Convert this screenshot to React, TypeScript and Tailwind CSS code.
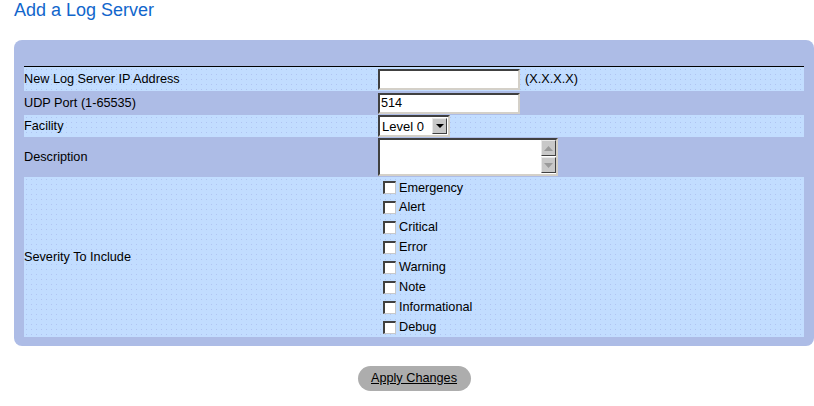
const severities = [
  "Emergency",
  "Alert",
  "Critical",
  "Error",
  "Warning",
  "Note",
  "Informational",
  "Debug",
];

const lightRow =
  "bg-[#c2ddff] bg-[radial-gradient(circle,#b0c4f2_0.6px,transparent_0.9px)] bg-[length:5px_5px]";
const darkRow = "bg-[#adbce6]";

const inset =
  "border-2 border-t-[#404040] border-l-[#404040] border-b-[#d4d0c8] border-r-[#d4d0c8] bg-white";

function Label({ children, light }: { children: React.ReactNode; light?: boolean }) {
  return (
    <div className={`flex items-center ${light ? lightRow : darkRow}`}>
      <span>{children}</span>
    </div>
  );
}

function Checkbox({ label }: { label: string }) {
  return (
    <div className="flex h-[20px] items-center pl-[5px]">
      <span className="w-[13px] h-[13px] bg-white border-t-2 border-l-2 border-b border-r border-t-[#404040] border-l-[#404040] border-b-[#c8c8c8] border-r-[#c8c8c8]" />
      <span className="ml-[3px]">{label}</span>
    </div>
  );
}

function ScrollBtn({ up }: { up?: boolean }) {
  return (
    <div className="w-[15px] h-[16px] flex items-center justify-center bg-[#c8c8c8] border border-t-[#e8e8e8] border-l-[#e8e8e8] border-b-[#404040] border-r-[#404040]">
      <svg width="9" height="5" viewBox="0 0 9 5">
        {up ? (
          <path d="M0 5 L4.5 0 L9 5 Z" fill="#9a9a9a" />
        ) : (
          <path d="M0 0 L4.5 5 L9 0 Z" fill="#9a9a9a" />
        )}
      </svg>
    </div>
  );
}

export default function App() {
  return (
    <div className="w-[814px] h-[406px] bg-white text-black font-['Liberation_Sans',Arial,sans-serif] text-[12.7px] leading-none overflow-hidden">
      <h1 className="pl-[14px] pt-[1px] text-[18px] leading-[18px] text-[#1166cc]">Add a Log Server</h1>

      <div className="ml-[14px] mt-[21px] w-[800px] rounded-[8px] bg-[#adbce6] px-[10px] pt-[26px] pb-[9px]">
        <div className="border-t border-black grid grid-cols-[354px_1fr] grid-rows-[24px_24px_22px_40px_160px]">
          <Label light>New Log Server IP Address</Label>
          <div className={`flex items-center ${lightRow}`}>
            <div className={`w-[142px] h-[21px] ${inset}`} />
            <span className="ml-[5px]">(X.X.X.X)</span>
          </div>

          <Label>UDP Port (1-65535)</Label>
          <div className={`flex items-center ${darkRow}`}>
            <div className={`w-[142px] h-[21px] flex items-center pl-[1px] ${inset}`}>514</div>
          </div>

          <Label light>Facility</Label>
          <div className={`flex items-center ${lightRow}`}>
            <div className={`w-[72px] h-[22px] flex items-center justify-between pl-[2px] pr-[1px] ${inset}`}>
              <span className="text-[13px]">Level 0</span>
              <div className="w-[15px] h-[16px] flex items-center justify-center bg-[#c8c8c8] border border-t-[#e8e8e8] border-l-[#e8e8e8] border-b-[#404040] border-r-[#404040]">
                <svg width="8" height="4" viewBox="0 0 8 4">
                  <path d="M0 0 L4 4 L8 0 Z" fill="#000" />
                </svg>
              </div>
            </div>
          </div>

          <Label>Description</Label>
          <div className={`flex items-center ${darkRow}`}>
            <div className={`w-[180px] h-[38px] flex flex-col ${inset}`}>
              <div className="flex flex-col items-end gap-[1px]">
                <ScrollBtn up />
                <ScrollBtn />
              </div>
            </div>
          </div>

          <Label light>Severity To Include</Label>
          <div className={`flex flex-col pt-[1px] ${lightRow}`}>
            {severities.map((s) => (
              <Checkbox key={s} label={s} />
            ))}
          </div>
        </div>
      </div>

      <div className="ml-[14px] w-[800px] mt-[20px] flex justify-center">
        <button className="w-[113px] h-[25px] rounded-full bg-[#adadad] underline text-[12.7px] font-['Liberation_Sans',Arial,sans-serif]">
          Apply Changes
        </button>
      </div>
    </div>
  );
}
